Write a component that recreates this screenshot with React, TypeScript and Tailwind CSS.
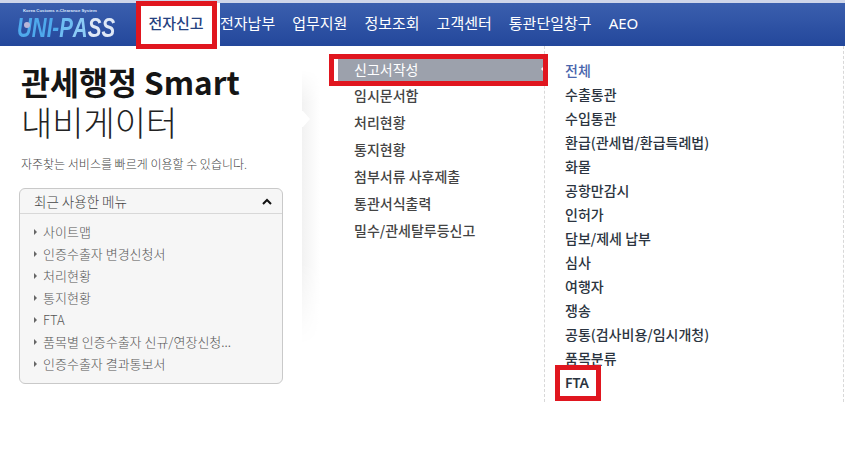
const font = "[font-family:'Noto_Sans_CJK_KR','Noto_Sans',sans-serif]";

const nav = ["전자납부", "업무지원", "정보조회", "고객센터", "통관단일창구"];
const middle = ["임시문서함", "처리현황", "통지현황", "첨부서류 사후제출", "통관서식출력", "밀수/관세탈루등신고"];
const right = ["수출통관", "수입통관", "환급(관세법/환급특례법)", "화물", "공항만감시", "인허가", "담보/제세 납부", "심사", "여행자", "쟁송", "공통(검사비용/임시개청)", "품목분류"];
const recent = ["사이트맵", "인증수출자 변경신청서", "처리현황", "통지현황", "FTA", "품목별 인증수출자 신규/연장신청...", "인증수출자 결과통보서"];

function Logo() {
  return (
    <div className="relative w-[100px] h-[36px] ml-[17px] shrink-0">
      <div className="text-[4.3px] leading-[6px] text-[#dbe6fb] font-['Liberation_Sans',sans-serif] font-bold ml-[6px] mt-[1px] whitespace-nowrap">Korea Customs e-Clearance System</div>
      <div className="flex w-[129px] text-[27px] leading-[29px] italic font-bold font-['Liberation_Sans',sans-serif] scale-x-[0.76] origin-left whitespace-nowrap">
        <span className="text-[#4fa9ec]">UNI-</span>
        <span className="text-[#6fbdf2]">P</span>
        <span className="text-[#8ccbf5]">A</span>
        <span className="text-[#dfe8f6]">S</span>
        <span className="text-[#dfe8f6]">S</span>
      </div>
      <span className="absolute left-[7px] top-[15px] w-[6px] h-[6px] rounded-full bg-[#b9b6d8]" />
    </div>
  );
}

export default function App() {
  return (
    <div className={`relative w-[845px] h-[456px] bg-white overflow-hidden ${font}`}>
      <div className="h-[3px] bg-[#cfd6ea]" />
      <header className="h-[43px] flex items-center bg-[linear-gradient(180deg,#3b5fae,#23479b)]">
        <Logo />
        <div className="ml-[23px] w-[80px] h-[43px] shrink-0 flex items-center justify-center bg-white text-[15px] font-medium text-[#26427f] pb-[3px] pr-[8px]">전자신고</div>
        <nav className="flex items-center gap-[17px] text-[15px] font-normal text-white pb-[3px]">
          {nav.map(n => <span key={n} className="whitespace-nowrap">{n}</span>)}
          <span className="font-['Noto_Sans',sans-serif]">AEO</span>
        </nav>
      </header>

      <main className="flex h-[410px]">
        <aside className="relative w-[303px] shrink-0 pl-[19px] h-[350px]">
          <h1 className="mt-[15px] ml-[2px] text-[31.5px] leading-[40px] font-bold text-[#151515] whitespace-nowrap">관세행정 Smart</h1>
          <div className="mt-[1px] ml-[2px] text-[34px] leading-[40px] font-light text-[#222]">내비게이터</div>
          <p className="mt-[14px] ml-[2px] text-[12px] leading-[16px] font-light text-[#444]">자주찾는 서비스를 빠르게 이용할 수 있습니다.</p>
          <section className="mt-[16px] w-[264px] h-[196px] border border-[#c9c9c9] rounded-[6px] bg-[#f6f6f6]">
            <div className="h-[25px] flex items-center justify-between pl-[14px] pr-[10px] border-b border-[#d8d8d8] text-[13.5px] font-light text-[#444]">
              <span>최근 사용한 메뉴</span>
              <svg width="10" height="7" viewBox="0 0 10 7" fill="none" stroke="#111" strokeWidth="2"><path d="M1 6l4-4 4 4" /></svg>
            </div>
            <ul className="pt-[7px] text-[13px] font-light text-[#555]">
              {recent.map(r => (
                <li key={r} className="h-[22px] flex items-center pl-[14px] gap-[6px] whitespace-nowrap">
                  <svg width="3" height="6" viewBox="0 0 3 6" className="shrink-0"><path d="M0 0l3 3-3 3z" fill="#666" /></svg>
                  <span>{r}</span>
                </li>
              ))}
            </ul>
          </section>
          <div className="absolute left-[302px] top-[24px] w-[18px] h-[275px] bg-[linear-gradient(90deg,#f2f2f2,#ffffff)] [mask-image:linear-gradient(180deg,transparent,#000_12%,#000_70%,transparent)]" />
          <div className="absolute left-[300px] top-[65px] w-[10px] h-[16px] bg-white [clip-path:polygon(0_0,30%_0,100%_50%,30%_100%,0_100%)]" />
        </aside>

        <div className="w-[241px] shrink-0 pt-[13px] pl-[31px]">
          <div className="w-[210px] h-[22px] flex items-center justify-between bg-[#9ca1ac] border-l-[4px] border-white text-[14px] text-white pl-[16px] pb-[2px]">
            <span>신고서작성</span>
            <span className="w-0 h-0 border-y-[3px] border-y-transparent border-r-[3px] border-r-white" />
          </div>
          <ul className="mt-[1px] text-[14px] font-medium text-[#444]">
            {middle.map(m => <li key={m} className="h-[27px] flex items-center pl-[20px] whitespace-nowrap">{m}</li>)}
          </ul>
        </div>

        <div className="w-[300px] h-[356px] border-x border-dashed border-[#d8d8d8] pl-[20px] pt-[12px] text-[14px] leading-[24px] font-medium text-[#2b3440]">
          <div className="text-[#4a66ad]">전체</div>
          {right.map(r => <div key={r} className="whitespace-nowrap">{r}</div>)}
          <div className="mt-[1px] font-['Noto_Sans',sans-serif] font-semibold">FTA</div>
        </div>
      </main>

      <div className="absolute left-[136px] top-[1px] w-[81px] h-[48px] border-[5px] border-[#e0161f]" />
      <div className="absolute left-[329px] top-[54px] w-[219px] h-[32px] border-[5px] border-[#e0161f]" />
      <div className="absolute left-[555px] top-[365px] w-[46px] h-[36px] border-[5px] border-[#e0161f]" />
    </div>
  );
}
